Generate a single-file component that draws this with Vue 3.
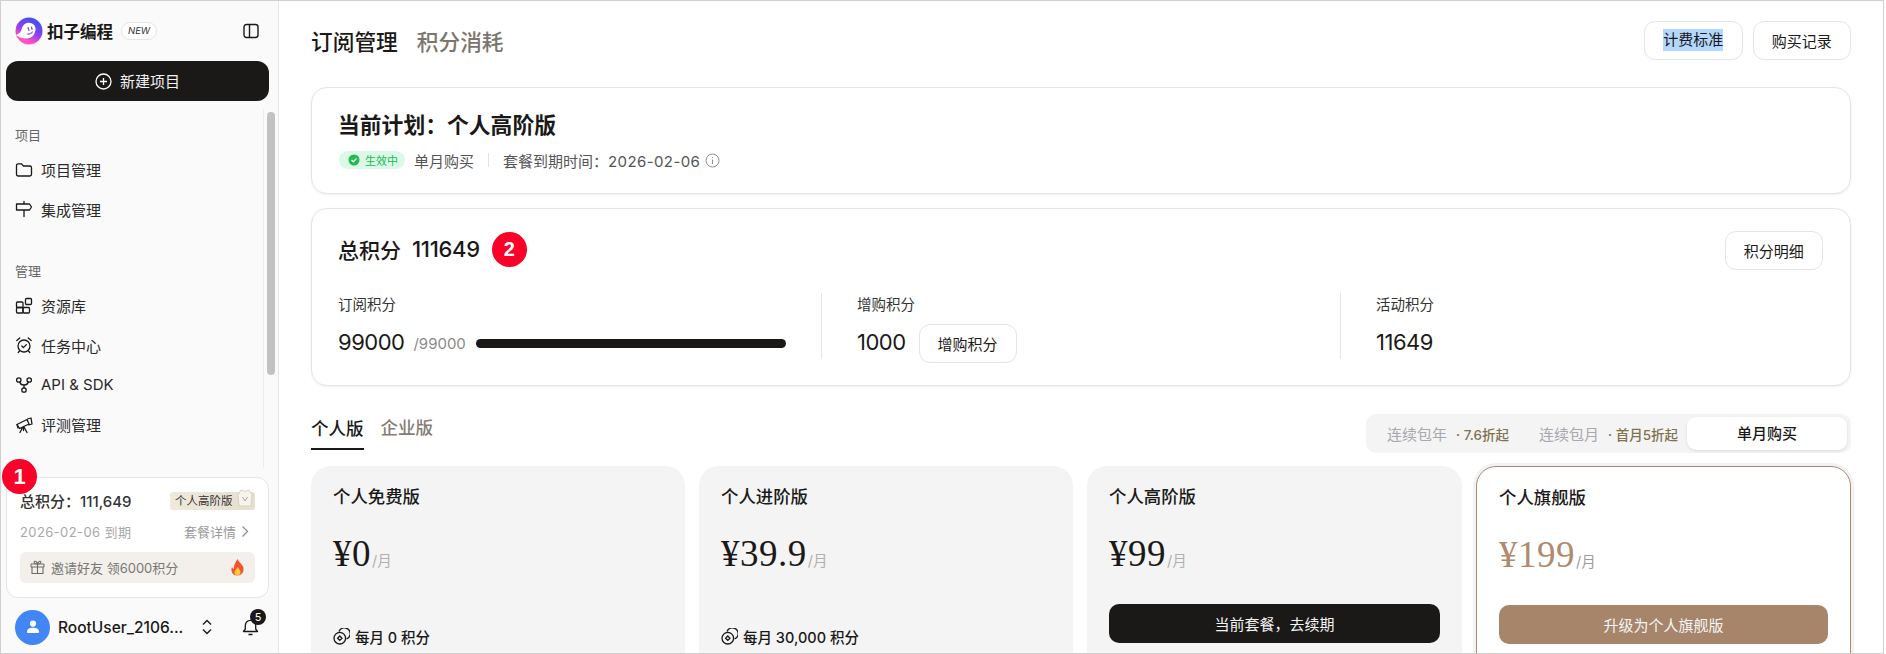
<script setup>
const navGroups = [
  { label: '项目', cls: 'first', items: [
    { name: '项目管理', icon: 'folder' },
    { name: '集成管理', icon: 'sign' }
  ] },
  { label: '管理', cls: 'second', items: [
    { name: '资源库', icon: 'res' },
    { name: '任务中心', icon: 'alarm' },
    { name: 'API & SDK', icon: 'api' },
    { name: '评测管理', icon: 'scope' }
  ] }
]
const plans = [
  { name: '个人免费版', price: '¥0', points: '每月 0 积分' },
  { name: '个人进阶版', price: '¥39.9', points: '每月 30,000 积分' },
  { name: '个人高阶版', price: '¥99', btn: '当前套餐，去续期', btnCls: 'dark' },
  { name: '个人旗舰版', price: '¥199', btn: '升级为个人旗舰版', btnCls: 'gold', featured: true }
]
</script>

<template>
  <div class="frame">
    <aside class="side">
      <div class="brand">
        <svg class="logo" width="28" height="28" viewBox="0 0 28 28">
          <defs>
            <linearGradient id="lg" x1="0.75" y1="0" x2="0.25" y2="1">
              <stop offset="0" stop-color="#2f55f2" />
              <stop offset="0.5" stop-color="#8f3ff2" />
              <stop offset="0.8" stop-color="#ff4fc8" />
              <stop offset="1" stop-color="#ff5fc0" />
            </linearGradient>
          </defs>
          <circle cx="14" cy="14" r="13.500" fill="url(#lg)" />
          <path d="M1 18c3-1 5-3 6-7 1-3 4-6 8-5 4 .6 6 3.500 5.500 7-.6 5-4.500 8.500-9 8.500-4 0-8-1-10.500-3.500z" fill="#fff" />
          <path d="M13 10.500l1 3M16.500 10l.6 2.500M12.500 17c2 .4 3.800-.4 4.800-2" stroke="#7a4cf0" stroke-width="1.200" fill="none" stroke-linecap="round" />
        </svg>
        <span class="brand-name">扣子编程</span>
        <span class="new">NEW</span>
        <svg class="collapse" width="16" height="16" viewBox="0 0 16 16" fill="none" stroke="#1a1918" stroke-width="1.400">
          <rect x="1" y="1.500" width="14" height="13" rx="2.400" />
          <path d="M6.500 1.500v13" />
        </svg>
      </div>
      <button class="new-project">
        <svg width="17" height="17" viewBox="0 0 17 17" fill="none" stroke="#fff" stroke-width="1.300">
          <circle cx="8.500" cy="8.500" r="7.500" />
          <path d="M8.500 5v7M5 8.500h7" />
        </svg>
        <span class="np-text">新建项目</span>
      </button>
      <div class="nav-wrap">
        <nav class="nav">
          <div v-for="g in navGroups" :key="g.label" class="group" :class="g.cls">
            <div class="group-label">{{ g.label }}</div>
            <a v-for="it in g.items" :key="it.name" class="item">
              <svg width="18" height="18" viewBox="0 0 18 18" fill="none" stroke="#1a1918" stroke-width="1.300" stroke-linecap="round" stroke-linejoin="round">
                <path v-if="it.icon === 'folder'" d="M1.500 4.500c0-1 .7-1.700 1.700-1.700h3.200l2 2.200h6.400c1 0 1.700.7 1.700 1.700v6.600c0 1-.7 1.700-1.700 1.700H3.200c-1 0-1.700-.7-1.700-1.700z" />
                <g v-else-if="it.icon === 'sign'">
                  <path d="M9 1.500v2.500M9 10v6.500M1.500 4h13l2 3-2 3h-13z" fill="none" />
                </g>
                <g v-else-if="it.icon === 'res'">
                  <rect x="1.500" y="5" width="6.500" height="5.500" rx="1" />
                  <rect x="1.500" y="10.500" width="6.500" height="5.500" rx="1" />
                  <rect x="8" y="10.500" width="6.500" height="5.500" rx="1" />
                  <rect x="10.500" y="1.500" width="6" height="6" rx="1" />
                </g>
                <g v-else-if="it.icon === 'alarm'">
                  <circle cx="9" cy="10" r="6" />
                  <path d="M6.800 10l1.600 1.600 3-3M1.800 4.600l3-2.600M16.200 4.600l-3-2.600M4.500 15l-1.300 1.500M13.500 15l1.300 1.500" />
                </g>
                <g v-else-if="it.icon === 'api'">
                  <circle cx="3.800" cy="4" r="2.200" />
                  <circle cx="14.200" cy="4" r="2.200" />
                  <circle cx="9" cy="14" r="2.200" />
                  <path d="M4.800 6c.4 2 1.400 3 4.200 3s3.800-1 4.200-3M9 9v2.800" />
                </g>
                <g v-else>
                  <path d="M2 8.500l10-5 2 4.500-9.500 4.500zM12.500 3l3.500-1 1 6-3 1M7.500 11.500L5 16.500M9 11l3 5.500M8.500 11.500v3" />
                  <path d="M2 8.500l1 3.500" />
                </g>
              </svg>
              <span>{{ it.name }}</span>
            </a>
          </div>
        </nav>
        <div class="thumb"></div>
      </div>
      <div class="points-card">
        <span class="pin one">1</span>
        <div class="pc-row">
          <span class="pc-total">总积分：111,649</span>
          <span class="pc-tag">
            个人高阶版
            <svg class="tag-icon" width="16" height="20" viewBox="0 0 16 20">
              <path d="M1 7l3-5 4 1.500L12 2l3 5-1 11H2z" fill="#f6f4ee" stroke="#cfcabd" stroke-width="0.800" />
              <path d="M5.500 9L8 13l2.500-4" stroke="#a09a8a" stroke-width="0.900" fill="none" />
            </svg>
          </span>
        </div>
        <div class="pc-row sub">
          <span class="wide-date">2026-02-06 到期</span>
          <span class="detail">套餐详情
            <svg width="8" height="13" viewBox="0 0 8 13" fill="none" stroke="#8f8f8f" stroke-width="1.300"><path d="M1.500 1.500l5 5-5 5" /></svg>
          </span>
        </div>
        <div class="invite">
          <svg width="15" height="15" viewBox="0 0 15 15" fill="none" stroke="#6e6a64" stroke-width="1.100">
            <rect x="1" y="4" width="13" height="3" rx="0.800" />
            <path d="M2 7v6.500h11V7M7.500 4v9.500M7.500 4C5 4 3.800 3 4.200 1.800 4.800.5 6.800 1.500 7.500 4zM7.500 4c2.500 0 3.700-1 3.300-2.200C10.200.5 8.200 1.500 7.500 4z" />
          </svg>
          <span class="invite-text">邀请好友 领6000积分</span>
          <svg class="fire" width="15" height="17" viewBox="0 0 15 17">
            <path d="M7.500 0c1 3 4 4.500 5.500 7.500 1.500 3.500 0 9-5.500 9S.5 11.500 2 8c.4 1 1 1.800 2 2C3.500 6 5.800 3 7.500 0z" fill="#f2542d" />
            <path d="M7.800 8c.5 1.500 2.700 2.500 2.700 5 0 2-1.400 3.500-3 3.500S4.500 15 4.500 13c0-2 2.700-3 3.300-5z" fill="#ffc83d" />
          </svg>
        </div>
      </div>
      <div class="user">
        <span class="avatar">
          <svg width="14" height="14" viewBox="0 0 14 14" fill="#fff">
            <circle cx="7" cy="3.600" r="3.100" />
            <path d="M1 12c0-3 2.500-4.300 6-4.300s6 1.300 6 4.300c0 .6-.4 1-1 1H2c-.6 0-1-.4-1-1z" />
          </svg>
        </span>
        <span class="user-name">RootUser_2106...</span>
        <svg class="updown" width="10" height="16" viewBox="0 0 10 16" fill="none" stroke="#1a1918" stroke-width="1.400">
          <path d="M1 5.500l4-4 4 4M1 10.500l4 4 4-4" />
        </svg>
        <span class="bell">
          <svg width="17" height="18" viewBox="0 0 17 18" fill="none" stroke="#1a1918" stroke-width="1.300" stroke-linejoin="round">
            <path d="M1.500 13.500h14l-1.800-2.500V7.500a5.200 5.200 0 0 0-10.400 0V11zM6.500 16.500h4" />
          </svg>
          <span class="bell-count">5</span>
        </span>
      </div>
    </aside>

    <main class="main">
      <header class="head">
        <div class="head-tabs">
          <span class="h-on">订阅管理</span>
          <span class="h-off">积分消耗</span>
        </div>
        <div class="head-btns">
          <button class="ghost"><span class="selected">计费标准</span></button>
          <button class="ghost">购买记录</button>
        </div>
      </header>

      <section class="card plan-card">
        <h2>当前计划：个人高阶版</h2>
        <div class="plan-meta">
          <span class="status">
            <svg width="12" height="12" viewBox="0 0 12 12">
              <circle cx="6" cy="6" r="5.500" fill="#22b856" />
              <path d="M3.500 6l1.800 1.800L8.500 4.500" stroke="#fff" stroke-width="1.300" fill="none" />
            </svg>
            生效中
          </span>
          <span>单月购买</span>
          <i class="vline"></i>
          <span>套餐到期时间：<span class="wide-date">2026-02-06</span></span>
          <svg class="info" width="15" height="15" viewBox="0 0 15 15" fill="none" stroke="#8f8f8f" stroke-width="1">
            <circle cx="7.500" cy="7.500" r="6.500" />
            <path d="M7.500 6.500v4.500M7.500 4v1" />
          </svg>
        </div>
      </section>

      <section class="card total-card">
        <div class="total-head">
          <div class="total-title">
            <span>总积分</span>
            <span class="total-num">111649</span>
            <span class="pin two">2</span>
          </div>
          <button class="ghost">积分明细</button>
        </div>
        <div class="cols">
          <div class="col">
            <div class="col-label">订阅积分</div>
            <div class="col-val">
              <span class="num">99000</span>
              <span class="of">/99000</span>
              <span class="bar"></span>
            </div>
          </div>
          <div class="col">
            <div class="col-label">增购积分</div>
            <div class="col-val">
              <span class="num">1000</span>
              <button class="ghost">增购积分</button>
            </div>
          </div>
          <div class="col last">
            <div class="col-label">活动积分</div>
            <div class="col-val"><span class="num">11649</span></div>
          </div>
        </div>
      </section>

      <div class="switch-row">
        <div class="edition">
          <span class="on">个人版</span>
          <span>企业版</span>
        </div>
        <div class="billing">
          <span class="bill">连续包年<em>· 7.6折起</em></span>
          <span class="bill">连续包月<em>· 首月5折起</em></span>
          <span class="bill active">单月购买</span>
        </div>
      </div>

      <div class="plans">
        <article v-for="p in plans" :key="p.name" class="plan" :class="{ featured: p.featured }">
          <div class="plan-name">{{ p.name }}</div>
          <div class="price"><span class="amount">{{ p.price }}</span><span class="per">/月</span></div>
          <button v-if="p.btn" class="buy" :class="p.btnCls">{{ p.btn }}</button>
          <div v-else class="feature">
            <svg width="17" height="17" viewBox="0 0 17 17" fill="none" stroke="#1a1918" stroke-width="1.300">
              <circle cx="6.800" cy="10.200" r="5.800" />
              <path d="M6 3.500A5.800 5.800 0 1 1 13.500 11" />
              <path d="M6.800 8l2.200 2.200-2.200 2.200-2.200-2.200z" />
            </svg>
            <span>{{ p.points }}</span>
          </div>
        </article>
      </div>
    </main>
  </div>
</template>

<style>
html, body { margin: 0; padding: 0; background: #fff; overflow: hidden; }
</style>

<style scoped>
.frame {
  box-sizing: border-box;
  width: 1884px;
  height: 654px;
  display: flex;
  border: 1px solid #cfcfcf;
  overflow: hidden;
  background: #fff;
  color: #1a1918;
  font-family: Inter, "Noto Sans CJK SC", sans-serif;
}
button { font-family: inherit; cursor: pointer; }
.side {
  flex: none;
  box-sizing: border-box;
  width: 278px;
  display: flex;
  flex-direction: column;
  background: #fafafa;
  border-right: 1px solid #e6e6e6;
}
.brand {
  height: 60px;
  flex: none;
  display: flex;
  align-items: center;
  padding: 0 19px 0 14px;
}
.brand-name { margin-left: 4px; font-size: 16.500px; font-weight: 700; }
.new {
  margin-left: 8px;
  border: 1px solid #e4e4e4;
  border-radius: 10px;
  background: #fff;
  padding: 0 6px;
  font-size: 9.500px;
  line-height: 16px;
  font-style: italic;
  color: #333;
}
.collapse { margin-left: auto; }
.new-project {
  flex: none;
  margin: 0 5px;
  height: 40px;
  width: 263px;
  border: 0;
  border-radius: 12px;
  background: #1a1918;
  color: #f2f2f2;
  font-size: 15px;
  display: flex;
  align-items: center;
  justify-content: center;
  gap: 8px;
}
.np-text { margin-top: -2px; }
.nav-wrap { position: relative; flex: none; height: 368px; margin-top: 8px; }
.nav { box-sizing: border-box; width: 263px; height: 359px; border-right: 1px solid #ececec; padding-top: 16px; }
.group-label { height: 20px; line-height: 20px; font-size: 13px; color: #666; padding-left: 14px; margin-bottom: 5px; }
.group.second { margin-top: 31.800px; }
.item { display: flex; align-items: center; gap: 8px; height: 39.600px; padding-left: 14px; font-size: 15px; color: #2a2a2a; }
.thumb { position: absolute; left: 266px; top: 3px; width: 8px; height: 263px; border-radius: 4px; background: #c1c1c1; }
.points-card {
  position: relative;
  flex: none;
  box-sizing: border-box;
  margin: 0 9px 0 5px;
  height: 121px;
  background: #fff;
  border: 1px solid #e5e5e5;
  border-radius: 12px;
  padding: 13px 13px 0 13px;
}
.pin {
  width: 35px;
  height: 35px;
  border-radius: 50%;
  background: #fb0029;
  color: #fff;
  font-family: "Liberation Sans", sans-serif;
  font-weight: 700;
  font-size: 22px;
  display: flex;
  align-items: center;
  justify-content: center;
}
.pin.one { position: absolute; left: -5px; top: -19px; }
.pc-row { display: flex; justify-content: space-between; align-items: center; height: 19px; }
.pc-total { font-size: 15px; color: #333; font-weight: 500; }
.pc-tag {
  position: relative;
  box-sizing: border-box;
  width: 85px;
  height: 18px;
  padding-left: 5px;
  border-radius: 3px;
  background: linear-gradient(90deg, #efe9dc, #e6dfd0);
  font-size: 11.500px;
  line-height: 18px;
  color: #333;
}
.tag-icon { position: absolute; right: 2px; top: -4px; }
.pc-row.sub { margin-top: 11px; font-size: 13px; color: #a8a8a8; height: 20px; }
.wide-date { letter-spacing: 0.400px; }
.detail { display: inline-flex; align-items: center; gap: 5px; padding-right: 6px; font-size: 13px; color: #9a9a9a; }
.invite {
  margin-top: 11px;
  height: 31px;
  box-sizing: border-box;
  padding: 0 10px;
  display: flex;
  align-items: center;
  gap: 6px;
  border-radius: 6px;
  background: #f3f0eb;
  font-size: 13px;
  color: #777;
}
.fire { margin-left: auto; }
.user { flex: 1; display: flex; align-items: center; padding: 3px 0 0 14px; position: relative; }
.avatar { width: 35px; height: 35px; border-radius: 50%; background: #4285f4; display: flex; align-items: center; justify-content: center; flex: none; }
.user-name { margin-left: 8px; width: 126px; font-size: 15.500px; font-weight: 500; white-space: nowrap; color: #1a1918; }
.updown { margin-left: 18px; }
.bell { position: relative; margin-left: 30px; display: flex; }
.bell-count {
  position: absolute;
  left: 8px;
  top: -9px;
  width: 16px;
  height: 16px;
  border-radius: 50%;
  background: #1a1918;
  color: #fff;
  font-size: 11px;
  text-align: center;
  line-height: 16px;
}

.main { flex: 1; min-width: 0; box-sizing: border-box; padding: 19px 32px 0 32px; overflow: hidden; }
.head { display: flex; justify-content: space-between; align-items: center; height: 40px; margin-bottom: 27px; }
.head-tabs { display: flex; gap: 19px; font-size: 21.700px; font-weight: 500; }
.h-off { color: #7c756d; }
.head-btns { display: flex; gap: 10px; }
.ghost {
  box-sizing: border-box;
  width: 98.500px;
  height: 39px;
  border: 1px solid #e5e5e5;
  border-radius: 11px;
  background: #fff;
  color: #1a1918;
  font-size: 15px;
  padding: 0;
}
.selected { background: #b3d7ff; display: inline-block; line-height: 22px; }
.card {
  box-sizing: border-box;
  background: #fff;
  border: 1px solid #e5e5e5;
  border-radius: 16px;
  box-shadow: 0 1px 3px rgba(0, 0, 0, 0.06);
}
.plan-card { height: 107px; padding: 22px 26px 0 26px; }
.plan-card h2 { margin: 0; font-size: 21.800px; line-height: 30px; font-weight: 600; }
.plan-meta { display: flex; align-items: center; margin-top: 10px; font-size: 15px; color: #555; height: 20px; margin-left: 1px; }
.status {
  display: inline-flex;
  align-items: center;
  gap: 5px;
  width: 66px;
  height: 18px;
  box-sizing: border-box;
  padding-left: 9px;
  border-radius: 9px;
  background: #dcf8e6;
  color: #22b856;
  font-size: 11px;
  margin-right: 9px;
}
.vline { width: 1px; height: 14px; background: #e2e2e2; margin: 0 14px; }
.info { margin-left: 5px; }
.total-card { height: 178px; margin-top: 14px; padding: 21px 27px 0 26px; }
.total-head { display: flex; justify-content: space-between; align-items: center; height: 40px; }
.total-title { display: flex; align-items: center; font-size: 21px; font-weight: 500; margin-top: -2px; }
.total-num { margin-left: 11px; font-size: 22px; letter-spacing: -0.300px; }
.pin.two { margin-left: 12px; font-size: 20px; }
.cols { display: grid; grid-template-columns: 519px 519px 1fr; margin-top: 23px; }
.col { position: relative; height: 66px; }
.col:not(.last)::after { content: ''; position: absolute; right: 35px; top: 0; width: 1px; height: 66px; background: #e5e5e5; }
.col-label { font-size: 14.500px; line-height: 20px; color: #333; margin-top: 2px; }
.col-val { display: flex; align-items: center; height: 39px; margin-top: 9px; }
.num { font-size: 22px; letter-spacing: -0.500px; margin-bottom: 4px; }
.of { margin-left: 9px; font-size: 15px; color: #8a8a8a; }
.bar { margin-left: 10px; width: 310px; height: 9px; border-radius: 5px; background: #1a1918; }
.col-val .ghost { margin-left: 13px; width: 98px; font-size: 15px; }
.switch-row { display: flex; justify-content: space-between; margin-top: 28px; height: 39px; }
.edition { display: flex; gap: 17px; font-size: 17.500px; font-weight: 500; color: #857d75; }
.edition span { height: 34px; line-height: 28px; box-sizing: border-box; }
.edition .on { color: #1a1918; border-bottom: 2px solid #1a1918; height: 36px; line-height: 30px; }
.billing {
  display: flex;
  align-items: center;
  box-sizing: border-box;
  width: 485px;
  height: 39px;
  padding: 3px 4px 3px 0;
  border-radius: 10px;
  background: #f4f4f5;
  font-size: 15px;
  color: #a8a8ae;
}
.bill { white-space: nowrap; padding-left: 21px; }
.bill + .bill { padding-left: 30px; }
.bill em { font-style: normal; font-size: 13.500px; font-weight: 500; color: #80714f; margin-left: 9px; }
.bill.active {
  margin-left: auto;
  padding: 0;
  width: 160px;
  height: 33px;
  line-height: 33px;
  text-align: center;
  border-radius: 9px;
  background: #fff;
  color: #1a1918;
  font-weight: 500;
  box-shadow: 0 1px 3px rgba(0, 0, 0, 0.1);
}
.plans { display: grid; grid-template-columns: 374px 374px 375px 375px; gap: 14px; margin-top: 13px; }
.plan {
  box-sizing: border-box;
  height: 300px;
  background: #f4f4f4;
  border-radius: 20px;
  padding: 19px 22px 0 22px;
}
.plan.featured {
  background: #fff;
  border: 1px solid #ab8a6d;
  box-shadow: 0 0 0 3px #f2f2f2;
  padding: 19px 22px 0 22px;
}
.plan-name { font-size: 17.400px; line-height: 24px; font-weight: 500; color: #1a1918; }
.price { margin-top: 25px; height: 40px; display: flex; align-items: baseline; font-family: "Liberation Serif", serif; }
.amount { font-size: 37px; line-height: 40px; letter-spacing: 0.500px; }
.per { font-family: Inter, "Noto Sans CJK SC", sans-serif; font-size: 14.500px; color: #b0b0b0; margin-left: 1px; }
.featured .amount { color: #ae8b6e; }
.featured .per { color: #9d9d9d; }
.buy {
  display: block;
  width: 100%;
  height: 39px;
  margin-top: 30px;
  border: 0;
  border-radius: 10px;
  color: #f5f5f5;
  font-size: 15px;
}
.buy.dark { background: #1a1918; }
.buy.gold { background: #a6856a; }
.feature { display: flex; align-items: center; gap: 5px; margin-top: 52px; font-size: 14.500px; font-weight: 500; }
</style>
